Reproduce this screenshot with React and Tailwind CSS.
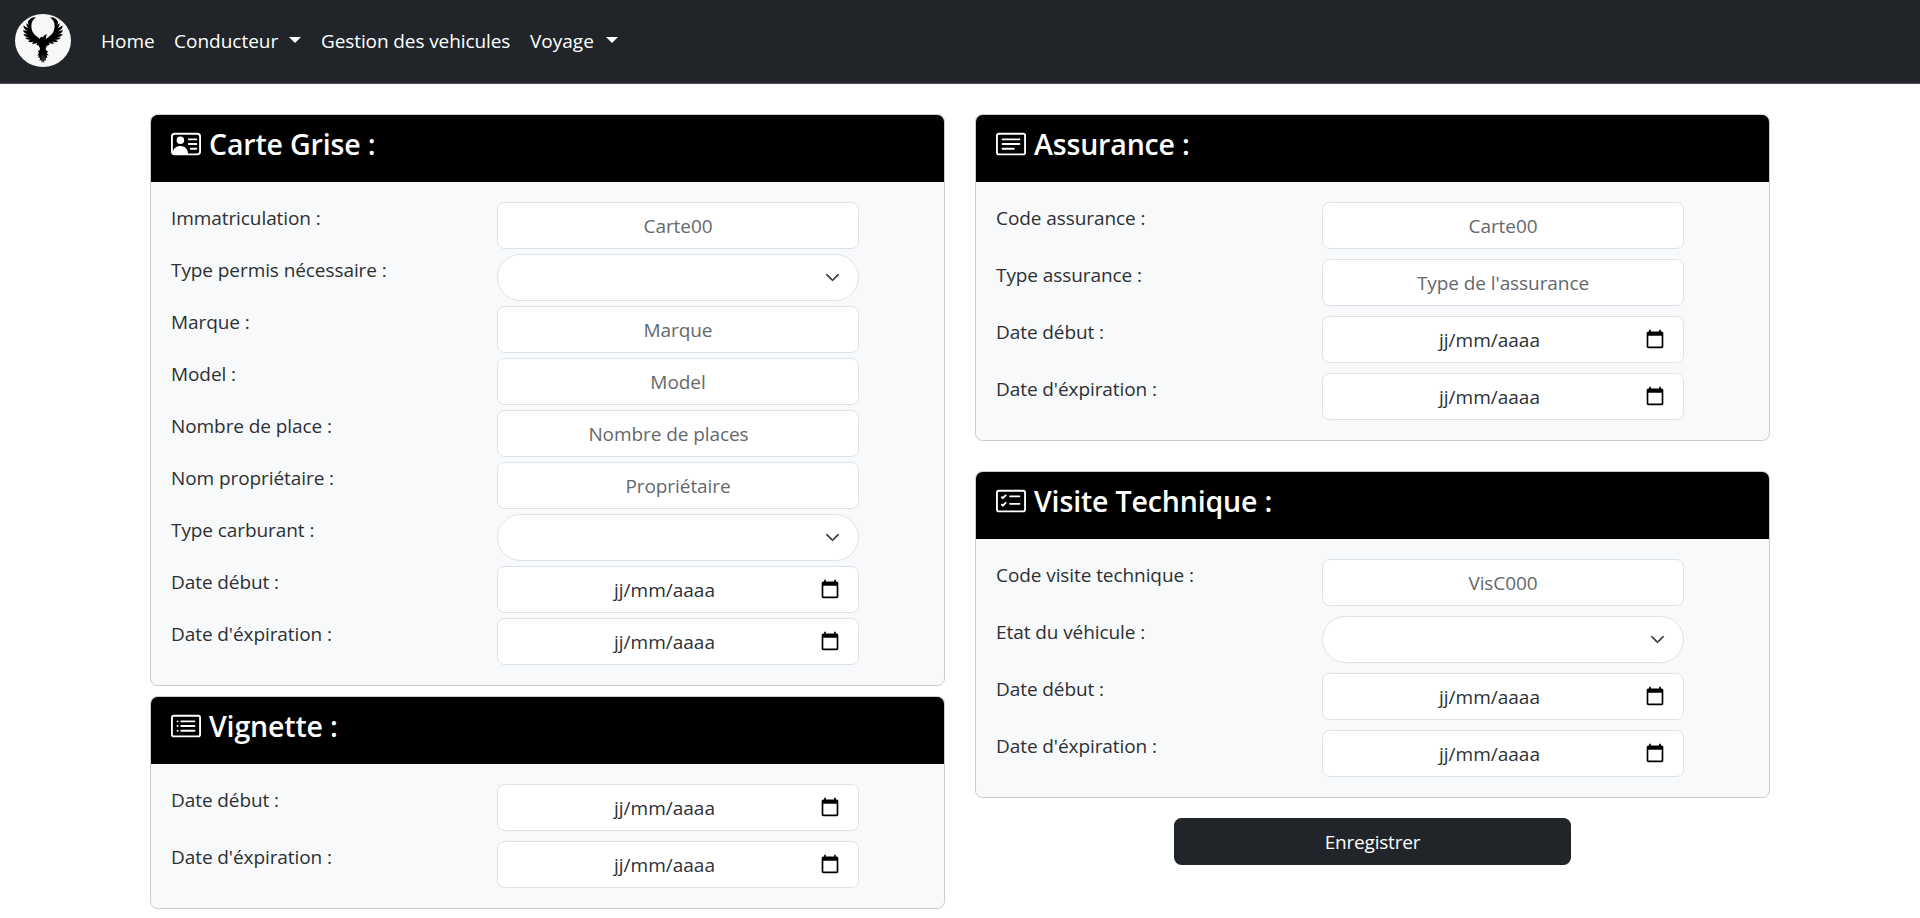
import { BsPersonVcard, BsCardText, BsCardList, BsCardChecklist, BsChevronDown } from "react-icons/bs";

const WING =
  "M108 51 C97 50 87 56 83 66 L87 74 L79 69 C79 74 81 79 85 84 L70 76 C70 83 75 89 83 93 L69 89 C71 97 77 101 85 103 L70 101 C73 108 80 111 88 111 L76 113 C80 119 86 120 93 118 L84 123 C89 127 95 127 101 123 L96 130 C102 132 107 131 112 127 L109 134 C113 136 118 136 122 138 L130 146 L130 124 L121 118 C117 113 110 110 104 104 C98 97 94 88 94 77 C94 66 99 57 108 51 Z";

function Logo() {
  return (
    <svg viewBox="45 41 168 160" className="h-[53px] w-14 shrink-0" preserveAspectRatio="none">
      <ellipse cx="129" cy="121" rx="84" ry="80" fill="#f8f8f8" />
      <path d={WING} />
      <path d={WING} transform="translate(258 0) scale(-1 1)" />
      <path d="M119 116 L122 111 C124 109 127 110 129 112 C130 107 134 104 141 102 C138 107 139 111 137 115 L141 119 L142 134 L137 145 L139 151 L145 155 L140 158 L146 166 L140 165 L142 174 L137 172 L138 183 L134 178 L132 189 L129 181 L126 189 L123 178 L119 184 L120 172 L115 174 L117 165 L112 168 L117 157 L113 155 L119 150 L120 145 L115 133 Z" />
      <path d="M126 166 L126 181 M132 166 L132 181" stroke="#bbb" strokeWidth="1.2" />
    </svg>
  );
}

function Caret({ className }) {
  return <span className={`h-0 w-0 border-x-6 border-t-6 border-x-transparent border-t-white ${className}`} />;
}

function Calendar() {
  return (
    <svg viewBox="0 0 24 24" className="mb-[2px] h-5 w-5">
      <path d="M20 3h-1V1h-2v2H7V1H5v2H4c-1.1 0-2 .9-2 2v16c0 1.1.9 2 2 2h16c1.1 0 2-.9 2-2V5c0-1.1-.9-2-2-2zm0 18H4V8h16v13z" />
    </svg>
  );
}

function Field({ type, text }) {
  if (type === "select") {
    return (
      <div className="flex h-[47px] w-[362px] items-center justify-end rounded-full border border-[#dee2e6] bg-white pr-[18px]">
        <BsChevronDown className="h-[15px] w-[15px] text-[#343a40]" strokeWidth="1" />
      </div>
    );
  }
  if (type === "date") {
    return (
      <div className="flex h-[47px] w-[362px] items-center rounded-[7.5px] border border-[#dee2e6] bg-white pr-[18px] pl-[15px]">
        <span className="flex-1 pr-[4px] text-center text-[19px] leading-[30px] text-[#2c3034]">jj/mm/aaaa</span>
        <Calendar />
      </div>
    );
  }
  return (
    <input
      placeholder={text}
      className={`h-[47px] w-[362px] rounded-[7.5px] border border-[#dee2e6] bg-white pl-[15px] text-center text-[19px] tracking-[-0.07px] placeholder:text-[#65686b] ${type === "number" ? "pr-[34px]" : "pr-[15px]"}`}
    />
  );
}

function Card({ Icon, title, rows, gap }) {
  return (
    <section className="overflow-hidden rounded-[7.5px] border border-[#cbccce] bg-[#f8f9fa]">
      <h4 className="flex h-[67px] gap-2 bg-black px-5 pt-[11px] text-[28.5px] leading-9 font-semibold tracking-[-0.15px] text-white">
        <Icon className="mt-[3px] h-[30px] w-[30px]" />
        {title}
      </h4>
      <div className={`flex flex-col py-5 ${gap}`}>
        {rows.map(([label, type, text]) => (
          <div key={label} className="flex h-[47px] pl-5">
            <label className="w-[326px] pt-[1px] text-[19px] leading-[30px] tracking-[-0.08px] text-[#2c3034]">{label}</label>
            <Field type={type} text={text} />
          </div>
        ))}
      </div>
    </section>
  );
}

const dates = [
  ["Date début :", "date"],
  ["Date d'éxpiration :", "date"],
];

const carte = [
  ["Immatriculation :", "text", "Carte00"],
  ["Type permis nécessaire :", "select"],
  ["Marque :", "text", "Marque"],
  ["Model :", "text", "Model"],
  ["Nombre de place :", "number", "Nombre de places"],
  ["Nom propriétaire :", "text", "Propriétaire"],
  ["Type carburant :", "select"],
  ...dates,
];

const assurance = [
  ["Code assurance :", "text", "Carte00"],
  ["Type assurance :", "text", "Type de l'assurance"],
  ...dates,
];

const visite = [
  ["Code visite technique :", "text", "VisC000"],
  ["Etat du véhicule :", "select"],
  ...dates,
];

export default function App() {
  return (
    <div className="h-[918px] overflow-hidden bg-white font-['Open_Sans','Noto_Sans',sans-serif]">
      <nav className="flex h-[84px] items-center border-b border-[#4d5154] bg-[#212529] pb-[2px] pl-[15px] text-[19px] whitespace-nowrap text-white">
        <Logo />
        <a className="mt-[2px] ml-[30px] w-[73px]">Home</a>
        <a className="mt-[2px] flex w-[147px] items-center">
          <span className="w-[115px]">Conducteur</span>
          <Caret className="-mt-[4px]" />
        </a>
        <a className="mt-[2px] w-[209px] tracking-[-0.1px]">Gestion des vehicules</a>
        <a className="mt-[2px] flex items-center">
          <span className="w-[76px]">Voyage</span>
          <Caret className="-mt-[4px]" />
        </a>
      </nav>
      <main className="flex gap-[30px] px-[150px] pt-[30px]">
        <div className="flex w-[795px] flex-col gap-[10px]">
          <Card Icon={BsPersonVcard} title="Carte Grise :" rows={carte} gap="gap-[5px]" />
          <Card Icon={BsCardList} title="Vignette :" rows={dates} gap="gap-[10px]" />
        </div>
        <div className="flex w-[795px] flex-col gap-[30px]">
          <Card Icon={BsCardText} title="Assurance :" rows={assurance} gap="gap-[10px]" />
          <Card Icon={BsCardChecklist} title="Visite Technique :" rows={visite} gap="gap-[10px]" />
          <button className="-mt-[10px] h-[47px] w-[397px] self-center rounded-[7.5px] bg-[#212529] pt-[1px] text-[19px] tracking-[-0.2px] text-white">
            Enregistrer
          </button>
        </div>
      </main>
    </div>
  );
}
